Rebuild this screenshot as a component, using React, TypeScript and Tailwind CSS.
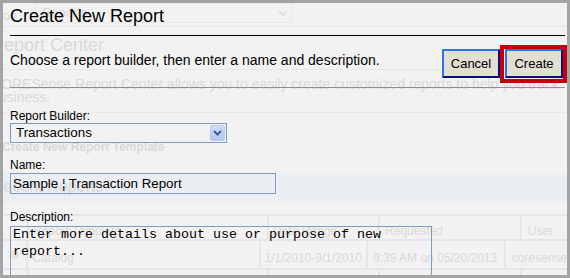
import React from "react";

const faint = "text-[#d9d9d9]";

// faded page that sits behind the dialog
const BackgroundPage: React.FC = () => {
  return (
    <div className="flex flex-col w-full">
      {/* top bar */}
      <div className="h-[24px] shrink-0 border-b border-[#e6e6e6] flex items-start">
        <span className={`w-[32px] pt-[4px] text-[12px] ${faint}`}>oo</span>
        <div className="w-[257px] h-[20px] border border-[#e8e8e8] flex items-center justify-between pl-[6px] pr-[3px]">
          <span className={`text-[13px] ${faint}`}>Reports</span>
          <svg width="10" height="8" viewBox="0 0 10 8">
            <polyline points="1,2 5,6 9,2" fill="none" stroke="#dcdcdc" strokeWidth="1.5" />
          </svg>
        </div>
      </div>

      {/* heading */}
      <div className="h-[43px] shrink-0 border-b border-[#e8e8e8] pt-[8px]">
        <div className={`ml-[-12px] text-[18px] leading-[21px] ${faint}`}>Report Center</div>
      </div>

      {/* intro */}
      <div className="h-[43px] shrink-0 border-b border-[#e8e8e8] pt-[8px]">
        <p className={`ml-[-12px] mr-[-8px] text-[14px] leading-[13px] ${faint}`}>
          CORESense Report Center allows you to easily create customized reports to help you track
          business.
        </p>
      </div>

      <div className="h-[61px] shrink-0 pt-[27px]">
        <div className={`ml-[-1px] text-[12px] leading-[14px] font-bold ${faint}`}>
          Create New Report Template
        </div>
      </div>

      <div className="h-[28px] shrink-0 bg-[#ebeef2] pt-[4px]">
        <div className={`ml-[-11px] text-[16px] leading-[18px] ${faint}`}>Recent Reports</div>
      </div>

      <div className="h-[12px] shrink-0" />

      {/* table */}
      <div className="shrink-0 border-t-2 border-[#e6e6e6]">
        <div className={`flex h-[25px] border-b-2 border-[#e6e6e6] text-[12px] ${faint}`}>
          <div className="w-[26px] border-r-2 border-[#e6e6e6]" />
          <div className="w-[240px] border-r-2 border-[#e6e6e6] pl-[4px] pt-[6px]">Report Template</div>
          <div className="w-[111px] border-r-2 border-[#e6e6e6] pl-[4px] pt-[6px]">Date Range</div>
          <div className="w-[142px] border-r-2 border-[#e6e6e6] pl-[5px] pt-[6px]">Requested</div>
          <div className="flex-1 pl-[6px] pt-[6px]">User</div>
        </div>
        <div className={`flex h-[29px] border-b-2 border-[#e6e6e6] text-[12px] ${faint}`}>
          <div className="w-[26px] border-r-2 border-[#e6e6e6] flex items-center justify-center">
            <span className="w-[8px] h-[8px] rounded-full border border-[#e2decf] bg-[#ece8da]" />
          </div>
          <div className="w-[240px] border-r-2 border-[#e6e6e6] pl-[4px] pt-[8px]">Catalog</div>
          <div className="w-[111px] border-r-2 border-[#e6e6e6] pl-[4px] pt-[8px]">1/1/2010-9/1/2010</div>
          <div className="w-[142px] border-r-2 border-[#e6e6e6] pl-[5px] pt-[8px]">9:39 AM on 05/20/2013</div>
          <div className="flex-1 pl-[6px] pt-[8px]">coresense</div>
        </div>
        <div className="flex h-[20px]">
          <div className="w-[26px] border-r-2 border-[#e6e6e6]" />
          <div className="w-[240px] border-r-2 border-[#e6e6e6]" />
          <div className="w-[111px] border-r-2 border-[#e6e6e6]" />
          <div className="w-[142px] border-r-2 border-[#e6e6e6]" />
        </div>
      </div>
    </div>
  );
};

const XpButton: React.FC<{ label: string }> = ({ label }) => (
  <button
    type="button"
    className="w-[58px] h-[29px] border-2 border-t-[#2c72ec] border-l-[#2c72ec] border-b-[#0c0c7a] border-r-[#0c0c7a] bg-[#e1ded2] text-[13px] text-black leading-none"
  >
    {label}
  </button>
);

export default function App() {
  return (
    <div className="w-[570px] h-[278px] border-[3px] border-[#a4a4a4] bg-[#f2f2f2] relative overflow-hidden font-['Liberation_Sans',Arial,sans-serif]">
      <BackgroundPage />

      {/* dialog laid over the page */}
      <div className="absolute inset-0 flex flex-col pl-[7px] text-black">
        <h1 className="shrink-0 mt-[3px] text-[18px] leading-[20px] font-normal">Create New Report</h1>
        <div className="shrink-0 mt-[9px] h-px bg-black mr-[2px]" />

        <div className="shrink-0 mt-[9px] flex items-start h-[38px]">
          <p className="flex-1 mt-[7px] text-[14px] leading-[16px]">
            Choose a report builder, then enter a name and description.
          </p>
          <div className="mt-[4px]">
            <XpButton label="Cancel" />
          </div>
          <div className="w-[67px] h-[38px] border-4 border-[#c4000b] pl-[1px]">
            <XpButton label="Create" />
          </div>
        </div>

        <div className="shrink-0 mt-[4px] h-px bg-[#8e8e8e] mr-[2px]" />

        <label className="shrink-0 mt-[21px] text-[12px] leading-[14px]">Report Builder:</label>
        <div className="shrink-0 w-[217px] h-[20px] border border-[#7f9db9] flex items-center justify-between pl-[5px] pr-px">
          <span className="text-[13.33px]">Transactions</span>
          <div className="w-[15px] h-[16px] rounded-[2px] border border-[#b9cbf3] bg-gradient-to-b from-[#cedbfb] to-[#b3c6f4] flex items-center justify-center">
            <svg width="9" height="6" viewBox="0 0 9 6">
              <polyline points="1,1 4.5,4.5 8,1" fill="none" stroke="#4c5f86" strokeWidth="2" />
            </svg>
          </div>
        </div>

        <label className="shrink-0 mt-[15px] text-[12px] leading-[14px]">Name:</label>
        <input
          readOnly
          value="Sample ¦ Transaction Report"
          className="shrink-0 mt-px w-[266px] h-[21px] border border-[#7f9db9] bg-transparent pl-[2px] text-[13.33px] text-black outline-none"
        />

        <label className="shrink-0 mt-[16px] text-[12px] leading-[14px]">Description:</label>
        <textarea
          readOnly
          value="Enter more details about use or purpose of new report..."
          className="shrink-0 mt-[2px] w-[422px] h-[80px] border border-[#7f9db9] bg-transparent pl-[2px] pt-0 text-[13.33px] leading-[16.5px] font-['Liberation_Mono',monospace] text-black resize-none overflow-hidden outline-none"
        />
      </div>
    </div>
  );
}
